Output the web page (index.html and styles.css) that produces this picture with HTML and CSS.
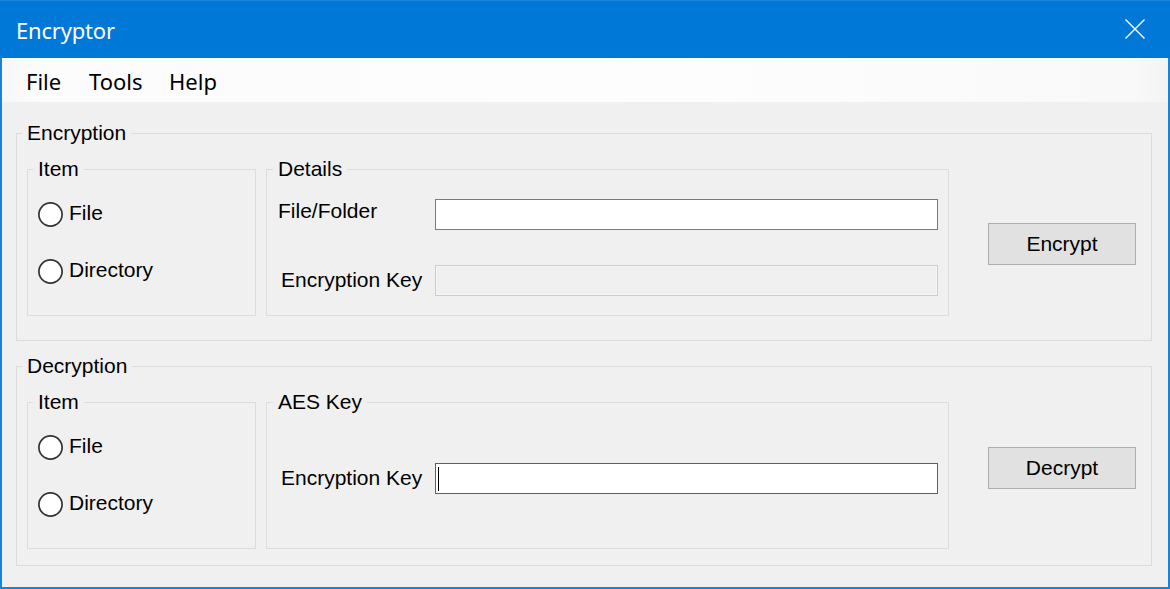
FILE: index.html
```html
<!DOCTYPE html>
<html>
<head>
<meta charset="utf-8">
<title>Encryptor</title>
<link rel="stylesheet" href="styles.css">
</head>
<body>
<div class="window">
  <div class="titlebar">
    <span class="title">Encryptor</span>
    <span class="close">
      <svg width="20" height="20" viewBox="0 0 20 20"><path d="M0.5 0.5 L19.5 19.5 M19.5 0.5 L0.5 19.5" stroke="#ffffff" stroke-width="1.4" fill="none"/></svg>
    </span>
  </div>
  <div class="frame">
    <div class="menubar">
      <span class="menu-item">File</span>
      <span class="menu-item">Tools</span>
      <span class="menu-item">Help</span>
    </div>
    <div class="content">
      <fieldset class="group outer enc">
        <legend>Encryption</legend>
        <div class="row">
          <fieldset class="group item">
            <legend>Item</legend>
            <div class="radio first"><svg class="circle" width="25" height="25" viewBox="0 0 25 25"><circle cx="12.5" cy="12.5" r="11.6" fill="#ffffff" stroke="#333333" stroke-width="1.7"/></svg><span class="rlabel">File</span></div>
            <div class="radio second"><svg class="circle" width="25" height="25" viewBox="0 0 25 25"><circle cx="12.5" cy="12.5" r="11.6" fill="#ffffff" stroke="#333333" stroke-width="1.7"/></svg><span class="rlabel">Directory</span></div>
          </fieldset>
          <fieldset class="group details">
            <legend>Details</legend>
            <div class="form enc-form">
              <span class="flabel">File/Folder</span>
              <div class="field"></div>
              <span class="flabel key">Encryption Key</span>
              <div class="field disabled"></div>
            </div>
          </fieldset>
          <button class="btn enc-btn">Encrypt</button>
        </div>
      </fieldset>
      <fieldset class="group outer dec">
        <legend>Decryption</legend>
        <div class="row">
          <fieldset class="group item">
            <legend>Item</legend>
            <div class="radio first"><svg class="circle" width="25" height="25" viewBox="0 0 25 25"><circle cx="12.5" cy="12.5" r="11.6" fill="#ffffff" stroke="#333333" stroke-width="1.7"/></svg><span class="rlabel">File</span></div>
            <div class="radio second"><svg class="circle" width="25" height="25" viewBox="0 0 25 25"><circle cx="12.5" cy="12.5" r="11.6" fill="#ffffff" stroke="#333333" stroke-width="1.7"/></svg><span class="rlabel">Directory</span></div>
          </fieldset>
          <fieldset class="group details">
            <legend>AES Key</legend>
            <div class="form dec-form">
              <span class="flabel key">Encryption Key</span>
              <div class="field focused"><span class="caret"></span></div>
            </div>
          </fieldset>
          <button class="btn dec-btn">Decrypt</button>
        </div>
      </fieldset>
    </div>
  </div>
</div>
</body>
</html>
```

FILE: styles.css
```css
* { box-sizing: border-box; }

html, body {
  margin: 0;
  padding: 0;
  background: #f0f0f0;
}

.window {
  width: 1170px;
  height: 589px;
  display: flex;
  flex-direction: column;
  font-family: "Liberation Sans", Arial, sans-serif;
  font-size: 21px;
  color: #000;
}

.titlebar {
  height: 58px;
  flex: none;
  background: #0078d7;
  border-top: 1px solid #1a86da;
  display: flex;
  align-items: center;
  justify-content: space-between;
  padding: 0 25px 1px 16px;
}

.title {
  font-family: "Noto Sans", "Open Sans", sans-serif;
  font-size: 22px;
  color: #ffffff;
  line-height: 30px;
  margin-top: 1px;
  letter-spacing: -0.2px;
}

.close {
  display: flex;
  width: 20px;
  height: 20px;
}

.frame {
  flex: 1;
  border: 2px solid #1883d7;
  border-top: none;
  display: flex;
  flex-direction: column;
  background: #f0f0f0;
}

.menubar {
  height: 44px;
  flex: none;
  background: linear-gradient(to right, #f7f7f7 0%, #fcfcfc 3%, #fdfdfd 60%, #f9f9f9 97%, #f3f3f3 100%);
  display: flex;
  align-items: center;
  padding-left: 22px;
  gap: 0;
}

.menu-item {
  font-family: "Noto Sans", "Open Sans", sans-serif;
  font-size: 22px;
  line-height: 30px;
  padding: 0 2px;
  margin-top: 2px;
}

.menu-item:nth-child(1) { width: 63px; }
.menu-item:nth-child(2) { width: 80px; }

.content {
  padding: 0 16px 0 14px;
}

.group {
  margin: 0;
  min-width: 0;
  border: 1px solid #dcdcdc;
}

.group legend {
  padding: 0 5px;
  margin-left: -5px;
  font-size: 21px;
  line-height: 24px;
}

.outer {
  padding: 12px 15px 24px 10px;
}

.outer.enc { margin-top: 19px; }
.outer.dec { margin-top: 13px; padding-bottom: 16px; }

.row {
  display: flex;
  align-items: flex-start;
}

.item {
  width: 229px;
  height: 159px;
  margin-right: 10px;
  padding: 0 10px;
}

.details {
  width: 683px;
  height: 159px;
  padding: 0 10px 0 11px;
}

.radio {
  display: flex;
  align-items: center;
  height: 25px;
}

.radio.first { margin-top: 21px; }
.radio.second { margin-top: 32px; }

.circle {
  flex: none;
  display: block;
}

.rlabel {
  margin-left: 6px;
  line-height: 24px;
  margin-bottom: 3px;
}

.form {
  display: grid;
  grid-template-columns: 157px 503px;
  align-items: start;
}

.enc-form {
  margin-top: 18px;
  row-gap: 35px;
}

.dec-form {
  margin-top: 49px;
}

.flabel {
  line-height: 24px;
  white-space: nowrap;
}

.flabel.key {
  padding-left: 3px;
  margin-top: 3px;
}

.field {
  height: 31px;
  background: #ffffff;
  border: 1px solid #7a7a7a;
  display: flex;
  align-items: center;
}

.field.disabled {
  background: #f0f0f0;
  border: 1px solid #cccccc;
  box-shadow: inset 0 0 0 1px #f7f7f7;
}

.field.focused {
  border: 1px solid #0078d7;
}

.caret {
  width: 1px;
  height: 24px;
  margin-left: 2px;
  background: #000000;
}

.btn {
  width: 148px;
  height: 42px;
  flex: none;
  background: #e1e1e1;
  border: 1px solid #adadad;
  font-family: "Liberation Sans", Arial, sans-serif;
  font-size: 21px;
  color: #000;
  padding: 0;
  margin-left: 39px;
}

.enc-btn { margin-top: 66px; }
.dec-btn { margin-top: 57px; }
```
